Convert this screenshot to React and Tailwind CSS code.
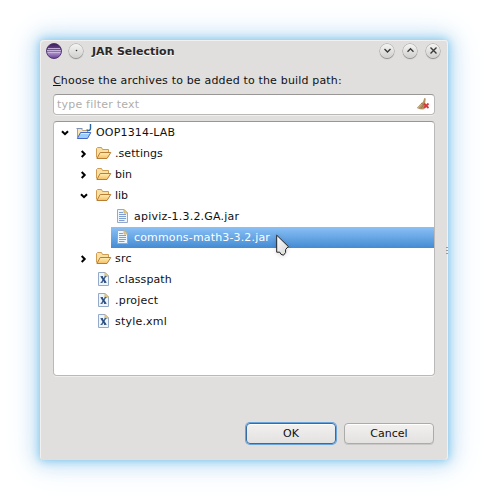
import React from "react";

function Arrow({ open }) {
  return (
    <svg width="8" height="8" viewBox="0 0 8 8" className="shrink-0" fill="none" stroke="#000" strokeWidth="2">
      <path d={open ? "M1 2.2 L4 5.2 L7 2.2" : "M1.7 1 L4.7 4 L1.7 7"} />
    </svg>
  );
}

function Folder() {
  return (
    <svg width="16" height="16" viewBox="0 0 16 16" className="shrink-0">
      <defs>
        <linearGradient id="folder" x2="0" y2="1">
          <stop stopColor="#ffefb8" />
          <stop offset="1" stopColor="#f5bf62" />
        </linearGradient>
      </defs>
      <path d="M.5 12.5V3.5L1.5 2.5H5.5L6.5 4.5H12.5V7" fill="#fae0a2" stroke="#cf9c50" />
      <path d="M.9 13.5 4.2 7.5H14.8L11 13.5H.9Z" fill="url(#folder)" stroke="#b97e35" strokeLinejoin="round" />
    </svg>
  );
}

function Project() {
  return (
    <svg width="16" height="17" viewBox="0 0 16 17" className="-ml-px mr-px shrink-0">
      <path d="M1.5 13V4.5H5.5L6.5 6.5H11.5V9" fill="#fbe7b0" stroke="#b9a070" />
      <path d="M.5 4.5H6.5" stroke="#7f8fb8" />
      <path d="M1.3 14.5 4.5 8.5H14.8L11.5 14.5H1.3Z" fill="#9bcdfa" stroke="#4468c4" strokeLinejoin="round" />
      <path d="M5 9.5H13.3" stroke="#d8f0ff" />
      <path d="M14.5 0V4.5Q14.4 6.5 12.5 6.5 11.2 6.5 10.8 5.5" fill="none" stroke="#27669d" strokeWidth="1.4" />
    </svg>
  );
}

function Doc({ xml }) {
  return (
    <svg width="16" height="16" viewBox="0 0 16 16" className="shrink-0" shapeRendering={xml ? "auto" : "auto"}>
      <path d="M2.5 1.5H9L12.5 5V14.5H2.5Z" fill="#edf5fd" stroke="#95aacb" />
      <path d="M9 1.5V5H12.5Z" fill="#ecd595" stroke="#ccb06b" strokeWidth=".9" />
      {xml ? (
        <g fill="none" stroke="#2c4f80">
          <path d="M5.5 5.5 9.5 11.5" strokeWidth="2" />
          <path d="M9.5 5.5 5.5 11.5" strokeWidth="1.3" />
          <path d="M4.5 5.5H7M8.5 5.5H10.5M4.5 11.5H6.5M8 11.5H10.5" strokeWidth=".8" />
        </g>
      ) : (
        <path d="M4 4.5H8M4 6.5H11M4 8.5H11M4 10.5H11M4 12.5H9.5" stroke="#819fce" />
      )}
    </svg>
  );
}

function RoundButton({ kind }) {
  const paths = {
    down: "M5 6.5 8 9.5 11 6.5",
    up: "M5 9.2 8 6.2 11 9.2",
    close: "M5 5 11 11M11 5 5 11",
  };
  return (
    <span className="-mt-px flex size-[14px] items-center justify-center rounded-full bg-linear-to-b from-[#f4f4f3] to-[#d1d0cf] shadow-[0_0_0_0.5px_#999897,0_1px_1px_#8a8988]">
      <svg width="15" height="15" viewBox="0.5 0.5 15 15" className="shrink-0" fill="none" stroke="#3a3a3a" strokeWidth="1.4">
        {kind === "dot" ? <circle cx="8" cy="8" r=".8" fill="#333" stroke="none" /> : <path d={paths[kind]} />}
      </svg>
    </span>
  );
}

function Eclipse() {
  return (
    <svg width="16" height="16" viewBox="0 0 16 16" className="shrink-0">
      <defs>
        <linearGradient id="orb" x2="0" y2="1">
          <stop stopColor="#3a1c55" />
          <stop offset=".35" stopColor="#65428a" />
          <stop offset=".65" stopColor="#a78aca" />
          <stop offset="1" stopColor="#65428d" />
        </linearGradient>
      </defs>
      <circle cx="8" cy="8" r="7.5" fill="url(#orb)" stroke="#4a2a6c" strokeWidth=".9" />
      <path d="M2 5.5H14M1 7.5H15M1.5 9.5H14.5" stroke="#d5c5ea" strokeWidth=".8" />
    </svg>
  );
}

function Broom() {
  return (
    <svg width="14" height="14" viewBox="0 0 14 14" className="-mt-px shrink-0">
      <path d="M8.3 1 9.8 1.5 9.2 5.5 9.5 9 7.5 12.4 4 12.3 .8 11 4 7.5 7 4.8Z" fill="#b39565" />
      <path d="M2 11 6.5 6.5" stroke="#c9ab7a" />
      <path d="M5 11.5 7.5 8" stroke="#9c7a48" />
      <path d="M5 6.2 9 8.2" stroke="#938168" />
      <path d="M8 6.5 12.5 11M12.5 6.5 8 11" stroke="#d43c3c" strokeWidth="1.8" />
    </svg>
  );
}

const rows = [
  { label: "OOP1314-LAB", pad: "pl-[7px]", spacing: "tracking-[0.17px]", icon: <Project />, arrow: true, open: true },
  { label: ".settings", pad: "pl-[26px]", spacing: "tracking-[0.06px]", icon: <Folder />, arrow: true },
  { label: "bin", pad: "pl-[26px]", spacing: "tracking-normal", icon: <Folder />, arrow: true },
  { label: "lib", pad: "pl-[26px]", spacing: "tracking-normal", icon: <Folder />, arrow: true, open: true },
  { label: "apiviz-1.3.2.GA.jar", pad: "ml-[57px] pl-[4px]", spacing: "tracking-[0.21px]", icon: <Doc /> },
  { label: "commons-math3-3.2.jar", pad: "ml-[57px] pl-[4px]", spacing: "tracking-[0.16px]", icon: <Doc />, selected: true },
  { label: "src", pad: "pl-[26px]", spacing: "tracking-[0.2px]", icon: <Folder />, arrow: true },
  { label: ".classpath", pad: "pl-[42px]", spacing: "tracking-[0.1px]", icon: <Doc xml /> },
  { label: ".project", pad: "pl-[42px]", spacing: "tracking-[0.2px]", icon: <Doc xml /> },
  { label: "style.xml", pad: "pl-[42px]", spacing: "tracking-[0.2px]", icon: <Doc xml /> },
];

export default function App() {
  return (
    <div className="relative h-[500px] w-[488px] overflow-hidden bg-white p-10 font-['DejaVu_Sans',sans-serif] text-[11px] leading-[13px] text-[#111]">
      <main className="flex h-[420px] w-[408px] flex-col rounded-[4px] bg-[#e0dfde] shadow-[inset_1px_1px_0_#f2f1f0,inset_-1px_0_0_#f2f1f0,0_0_8px_0_#7cc4ec,0_0_18px_3px_#bce0f5,0_0_32px_8px_#e5eff9]">
        <header className="flex h-[22px] items-center pl-[6px] pr-[8px]">
          <Eclipse />
          <span className="ml-[7px] flex"><RoundButton kind="dot" /></span>
          <h1 className="ml-[9px] flex-1 font-bold text-[#292929] [text-shadow:0_1px_0_#fff]">JAR Selection</h1>
          <div className="flex gap-[9px]">
            <RoundButton kind="down" />
            <RoundButton kind="up" />
            <RoundButton kind="close" />
          </div>
        </header>
        <div className="flex flex-1 flex-col px-[13px] pt-[12px]">
          <label className="h-[20px] whitespace-nowrap tracking-[0.17px]"><span className="underline underline-offset-1">C</span>hoose the archives to be added to the build path:</label>
          <div className="flex h-[21px] w-[382px] items-center justify-between rounded-[4px] border border-[#bab9b8] border-t-[#989796] bg-white pl-[3px] pr-[4px] text-[#b0aeac] shadow-[0_1px_0_#efeeed]">
            <span className="tracking-[0.21px]">type filter text</span>
            <Broom />
          </div>
          <div className="mt-[6px] h-[255px] w-[382px] rounded-[4px] border border-[#bab9b8] border-t-[#989796] bg-white shadow-[0_1px_0_#efeeed]">
            {rows.map((r) => (
              <div key={r.label} className={`flex h-[21px] items-center ${r.pad} ${r.selected ? "bg-linear-to-b from-[#8bc1f6] to-[#438bd3] text-white" : ""}`}>
                {r.arrow && <span className="mr-[8px] flex"><Arrow open={r.open} /></span>}
                <span className="-mt-px flex">{r.icon}</span>
                <span className={`ml-[3px] whitespace-nowrap ${r.spacing}`}>{r.label}</span>
              </div>
            ))}
          </div>
          <div className="mt-[47px] flex gap-[8px] pl-[193px]">
            <button className="h-[21px] w-[90px] rounded-[4px] border border-[#366ca6] bg-linear-to-b from-[#f2f1f0] to-[#e3e2e1] shadow-[0_0_0_1px_#69a4dd,inset_0_1px_0_#fff]">OK</button>
            <button className="h-[21px] w-[90px] rounded-[4px] border border-[#acabaa] bg-linear-to-b from-[#f2f1f0] to-[#e3e2e1] shadow-[0_1px_0_#c9c8c7,inset_0_1px_0_#fff]">Cancel</button>
          </div>
        </div>
      </main>
      <svg className="absolute left-[275px] top-[233px] drop-shadow-sm" width="16" height="24" viewBox="0 0 16 24">
        <defs>
          <linearGradient id="pointer" x2="1" y2="1">
            <stop stopColor="#fff" />
            <stop offset="1" stopColor="#d4d4d4" />
          </linearGradient>
        </defs>
        <path d="M1.7 2.2 13.3 13.5 10.6 16.5V19.5L8.5 22.2 6 21.3 4.8 19.2H1.7Z" fill="url(#pointer)" stroke="#222" strokeLinejoin="round" />
      </svg>
      <div className="absolute left-[446px] top-[247px] flex flex-col gap-[2px]">
        <i className="h-px w-[2px] bg-[#999]" />
        <i className="h-px w-[2px] bg-[#999]" />
        <i className="h-px w-[2px] bg-[#999]" />
      </div>
    </div>
  );
}
